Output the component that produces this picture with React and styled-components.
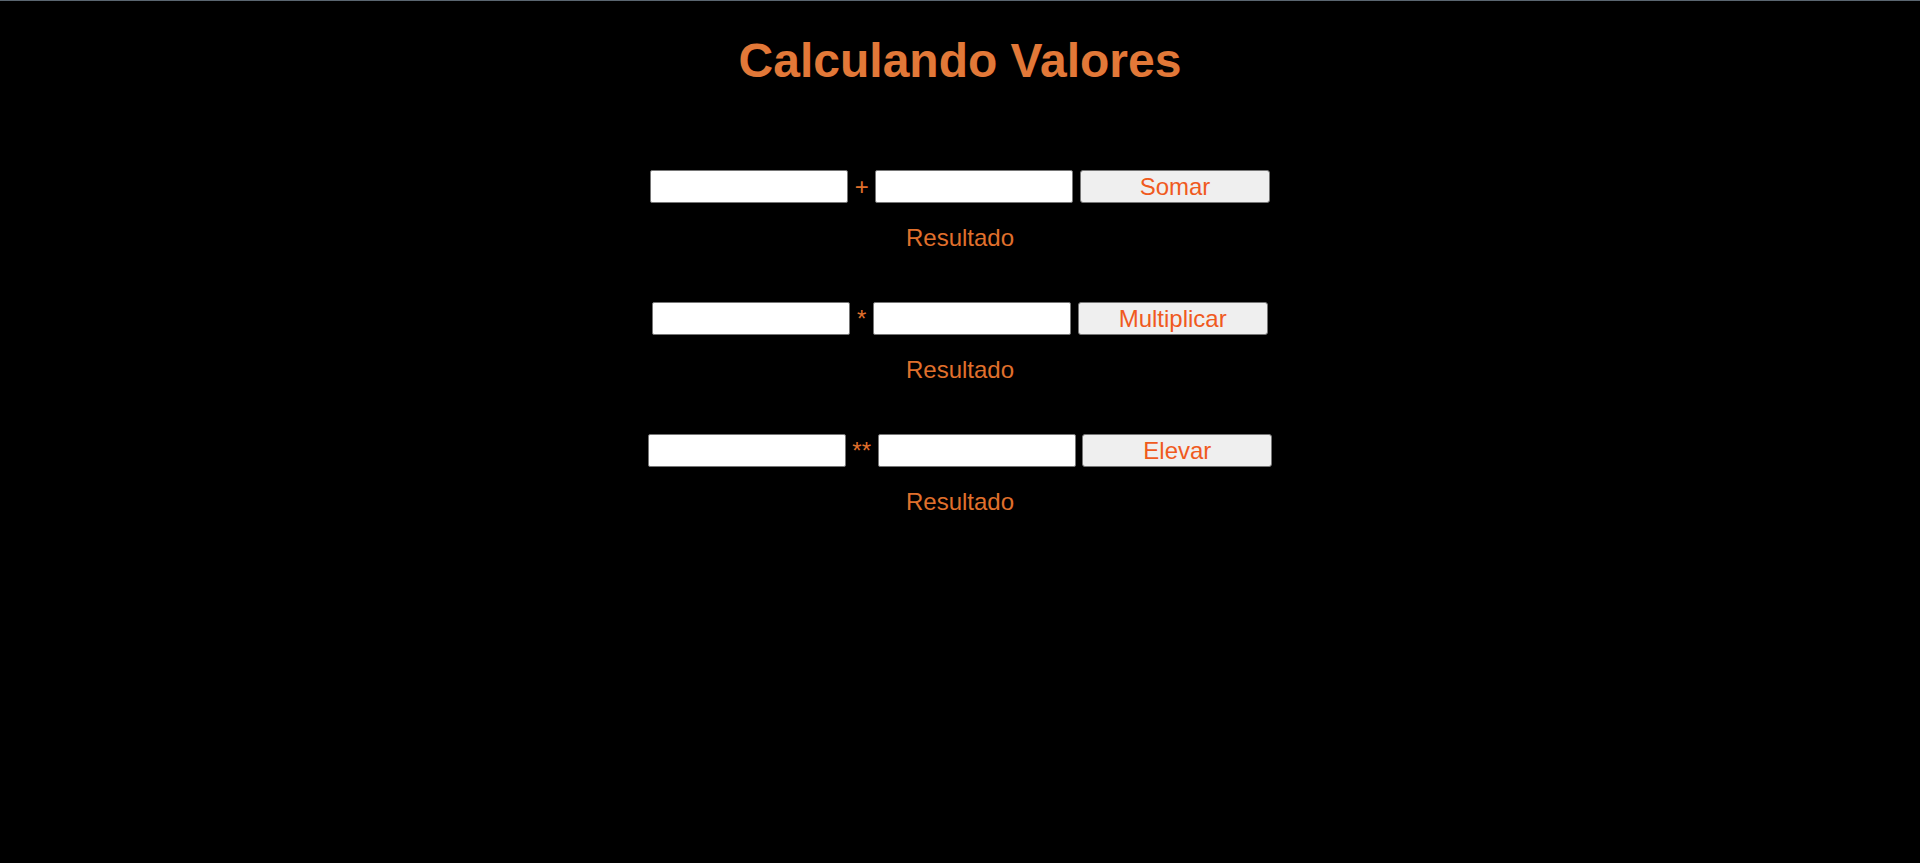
import React from "react";
import styled, { createGlobalStyle } from "styled-components";

const GlobalStyle = createGlobalStyle`
  html, body {
    margin: 0;
    padding: 0;
    background: #000;
  }
  body {
    font-family: "Liberation Sans", Arial, sans-serif;
  }
`;

const Page = styled.main`
  min-height: 862px;
  border-top: 1px solid #5a6670;
  padding-top: 32px;
  box-sizing: border-box;
  background: #000;
  display: flex;
  flex-direction: column;
  align-items: center;
`;

const Title = styled.h1`
  margin: 0;
  font-family: "Liberation Sans", Arial, sans-serif;
  font-size: 48px;
  font-weight: 700;
  line-height: 55px;
  color: #e27838;
  text-align: center;
`;

const Calculators = styled.div`
  margin-top: 82px;
  display: flex;
  flex-direction: column;
  align-items: center;
  gap: 51px;
`;

const Section = styled.section`
  display: flex;
  flex-direction: column;
  align-items: center;
`;

const Row = styled.div`
  display: flex;
  align-items: center;
  justify-content: center;
  gap: 6.67px;
  height: 33px;
`;

const NumberInput = styled.input`
  box-sizing: border-box;
  width: 198px;
  height: 33px;
  margin: 0;
  padding: 1px 2px;
  background: #fff;
  border: 1px solid #767676;
  border-radius: 2px;
  font-family: "Liberation Sans", Arial, sans-serif;
  font-size: 24px;
  color: #000;
  outline: none;
`;

const Operator = styled.span`
  font-family: "Liberation Sans", Arial, sans-serif;
  font-size: 24px;
  line-height: 27px;
  color: #e0702c;
  white-space: pre;
`;

const ActionButton = styled.button`
  box-sizing: border-box;
  width: 190px;
  height: 33px;
  margin: 0;
  padding: 0 6px;
  background: #efefef;
  border: 1px solid #767676;
  border-radius: 3px;
  font-family: "Liberation Sans", Arial, sans-serif;
  font-size: 24px;
  line-height: 27px;
  color: #f05a1e;
  cursor: pointer;
`;

const Result = styled.p`
  margin: 21px 0 0;
  font-family: "Liberation Sans", Arial, sans-serif;
  font-size: 24px;
  line-height: 27px;
  color: #e0702c;
  text-align: center;
`;

const operations = [
  { op: "+", label: "Somar", fn: (a, b) => a + b },
  { op: "*", label: "Multiplicar", fn: (a, b) => a * b },
  { op: "**", label: "Elevar", fn: (a, b) => a ** b },
];

function Calculator({ op, label, fn }) {
  const [a, setA] = React.useState("");
  const [b, setB] = React.useState("");
  const [result, setResult] = React.useState("Resultado");

  const compute = () => {
    const x = parseFloat(a);
    const y = parseFloat(b);
    if (Number.isNaN(x) || Number.isNaN(y)) {
      setResult("Resultado");
      return;
    }
    setResult(String(fn(x, y)));
  };

  return (
    <Section>
      <Row>
        <NumberInput value={a} onChange={(e) => setA(e.target.value)} />
        <Operator>{op}</Operator>
        <NumberInput value={b} onChange={(e) => setB(e.target.value)} />
        <ActionButton onClick={compute}>{label}</ActionButton>
      </Row>
      <Result>{result}</Result>
    </Section>
  );
}

export default function App() {
  return (
    <>
      <GlobalStyle />
      <Page>
        <Title>Calculando Valores</Title>
        <Calculators>
          {operations.map((o) => (
            <Calculator key={o.label} {...o} />
          ))}
        </Calculators>
      </Page>
    </>
  );
}
